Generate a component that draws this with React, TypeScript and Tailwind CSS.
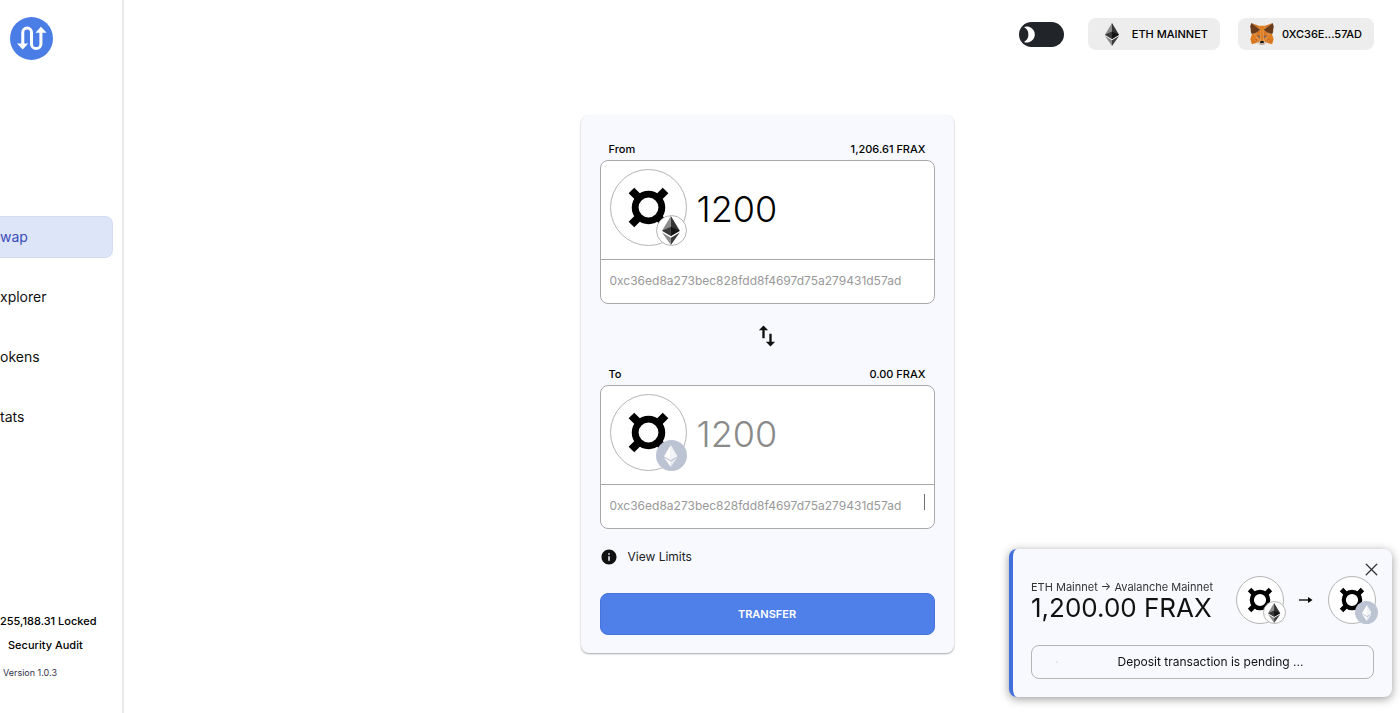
import { X } from 'lucide-react';
import { MdInfo, MdSwapVert } from 'react-icons/md';

const ADDRESS = '0xc36ed8a273bec828fdd8f4697d75a279431d57ad';

const navItems = [
  { href: '#swap', label: 'wap', active: true },
  { href: '#explorer', label: 'xplorer', active: false },
  { href: '#tokens', label: 'okens', active: false },
  { href: '#stats', label: 'tats', active: false },
];

function Logo() {
  return (
    <svg viewBox="0 0 128 128" className="size-[43px]" aria-hidden="true">
      <circle cx="64" cy="64" r="64" fill="#4a7ee6" />
      <path
        d="M38 82V46a13 13 0 0 1 26 0V80a14 14 0 0 0 28 0V44"
        fill="none"
        stroke="#fff"
        strokeWidth="9"
      />
      <path d="M21 79H54L38 97zM76 47H109L92 29z" fill="#fff" />
    </svg>
  );
}

function EthIcon({ className }: { className: string }) {
  return (
    <svg viewBox="0 0 256 417" className={className} aria-hidden="true">
      <path fill="#343434" d="M128 0l-3 9.500v275.700l3 2.800 128-75.700z" />
      <path fill="#8c8c8c" d="M128 0L0 212.300l128 75.700V154.200z" />
      <path fill="#3c3c3b" d="M128 312.200l-1.600 1.900v98.200l1.600 4.600L256 236.600z" />
      <path fill="#8c8c8c" d="M128 416.900V312.200L0 236.600z" />
      <path fill="#141414" d="M128 288l128-75.700-128-58.100z" />
      <path fill="#393939" d="M0 212.300L128 288V154.200z" />
    </svg>
  );
}

function EthPaleIcon({ className }: { className: string }) {
  return (
    <svg viewBox="0 0 256 417" className={className} aria-hidden="true">
      <path fill="#fff" d="M128 0L0 212.300l128 75.700z" />
      <path fill="#f1f3f7" d="M128 0v288l128-75.700z" />
      <path fill="#fff" d="M128 416.900V312.200L0 236.600z" />
      <path fill="#e6e9ef" d="M128 416.900V312.200l128-75.600z" />
    </svg>
  );
}

function FraxIcon({ className }: { className: string }) {
  return (
    <svg viewBox="0 0 77 77" className={className} aria-hidden="true">
      <g fill="none" stroke="#000">
        <circle cx="38.5" cy="38.5" r="13.7" strokeWidth="7" />
        <path
          d="M21 21l9 9M56 21l-9 9M21 56l9-9M56 56l-9-9"
          strokeWidth="8.200"
        />
      </g>
    </svg>
  );
}

function FoxIcon() {
  return (
    <svg viewBox="31 35 257 237" className="h-[22px] w-6" aria-hidden="true">
      <g fill="#d9771f">
        <path d="M274.100 35.500L174.600 109.400 193 65.800zM44.400 35.500l98.700 74.600-17.500-44.300z" />
        <path d="M238.300 206.800l-26.500 40.600 56.700 15.600 16.300-55.300zM33.900 207.700L50.100 263l56.700-15.600-26.500-40.600z" />
        <path d="M103.600 138.200l-15.800 23.900 56.300 2.500-2-60.500zM214.900 138.200l-39-34.800-1.300 61.200 56.200-2.500zM106.800 247.400l33.800-16.500-29.200-22.800zM177.900 230.900l33.900 16.500-4.700-39.300z" />
      </g>
      <path fill="#e07f22" d="M267.200 153.500l-52.300-15.300 15.900 23.900-23.700 46 31.200-.4h46.500zM103.600 138.200l-52.300 15.300-17.400 54.200h46.400l31.100.4-23.600-46zM174.600 164.600l3.300-57.700 15.200-41.100h-67.500l15 41.100 3.500 57.700 1.200 18.200.1 44.800h27.700l.2-44.800z" />
      <path fill="#e07f22" d="M179.800 193.500l-6.700 34.100 4.800 3.300 29.200-22.800 1-22.900zM110.600 185.200l.8 22.900 29.200 22.800 4.800-3.300-6.600-34.100z" />
      <path fill="#d9771f" d="M87.800 162.100l23.600 46-.8-22.900zM208.100 185.200l-1 22.900 23.700-46zM144.100 164.600l-5.300 28.900 6.600 34.100 1.500-44.900zM174.600 164.600l-2.700 18 1.200 45 6.700-34.100z" />
      <path fill="#c86517" d="M106.800 247.400l4.800-40.600-31.300.9zM207 206.800l4.800 40.600 26.500-39.700zM230.800 162.100l-56.200 2.500 5.200 28.900 8.300-17.400 20 9.100zM110.600 185.200l20-9.100 8.200 17.400 5.300-28.900-56.300-2.500z" />
      <path fill="#233447" d="M138.800 193.500l-28.200-8.300 19.900-9.100zM179.700 193.500l8.300-17.400 20 9.100z" />
      <path fill="#d7c1b3" d="M211.800 247.400l-33.900-16.500 2.700 22.100-.3 9.300zM106.800 247.400l31.500 14.900-.2-9.300 2.500-22.100z" />
      <path fill="#c0ad9e" d="M180.300 262.300l.3-9.300-2.500-2.200h-37.700l-2.300 2.200.2 9.300-31.500-14.900 11 9 22.300 15.500h38.300l22.400-15.500 11-9z" />
      <path fill="#161616" d="M177.900 230.900l-4.800-3.300h-27.700l-4.800 3.300-2.500 22.100 2.300-2.200h37.700l2.500 2.200z" />
      <path fill="#6b3c1c" d="M278.300 114.200l8.500-40.800-12.700-37.900-96.200 71.400 37 31.300 52.300 15.300 11.600-13.500-5-3.600 8-7.300-6.200-4.800 8-6.100zM31.800 73.400l8.500 40.800-5.400 4 8 6.100-6.100 4.800 8 7.300-5 3.600 11.500 13.500 52.300-15.300 37-31.300L44.400 35.500z" />
    </svg>
  );
}

function LargeCoin({ pale = false }: { pale?: boolean }) {
  return (
    <div className="relative size-[77px] shrink-0 rounded-full border border-[#b5b5b5] bg-white">
      <FraxIcon className="size-full" />
      {pale ? (
        <div className="absolute -right-px -bottom-px flex size-[31px] items-center justify-center rounded-full bg-[#bcc3d3]">
          <EthPaleIcon className="h-[22px]" />
        </div>
      ) : (
        <div className="absolute -right-px -bottom-px flex size-[31px] items-center justify-center rounded-full border border-[#b5b5b5] bg-white">
          <EthIcon className="h-[29px] shrink-0" />
        </div>
      )}
    </div>
  );
}

function SmallCoin({ pale = false }: { pale?: boolean }) {
  return (
    <div className="relative size-12 shrink-0 rounded-full border border-[#b5b5b5] bg-white">
      <FraxIcon className="size-full" />
      {pale ? (
        <div className="absolute -right-[3px] -bottom-px flex size-[23px] items-center justify-center rounded-full bg-[#bcc3d3]">
          <EthPaleIcon className="h-4" />
        </div>
      ) : (
        <div className="absolute -right-[3px] -bottom-px flex size-[23px] items-center justify-center rounded-full border border-[#b5b5b5] bg-white">
          <EthIcon className="h-5 shrink-0" />
        </div>
      )}
    </div>
  );
}

interface TokenPanelProps {
  id: string;
  label: string;
  balance: string;
  destination?: boolean;
}

function TokenPanel({ id, label, balance, destination = false }: TokenPanelProps) {
  return (
    <section>
      <div className="flex h-[22px] items-center justify-between px-[9px] text-[11px] font-medium text-black">
        <label htmlFor={`${id}-amount`}>{label}</label>
        <span>{balance}</span>
      </div>
      <div className="rounded-lg border border-[#a9a9a9] bg-white">
        <div className="flex h-[99px] items-start gap-2.5 border-b border-[#a9a9a9] px-[9px] pt-2">
          <LargeCoin pale={destination} />
          <input
            id={`${id}-amount`}
            type="text"
            defaultValue="1200"
            readOnly={destination}
            className={`h-20 min-w-0 flex-1 bg-transparent text-[36px] font-light outline-none ${
              destination ? 'text-[#8a8a8a]' : 'text-black'
            }`}
          />
        </div>
        <div className="flex h-[43px] items-center px-[9px] pb-0.5">
          <input
            type="text"
            aria-label={`${label} address`}
            defaultValue={ADDRESS}
            readOnly
            className="h-6 min-w-0 flex-1 bg-transparent text-xs text-[#999999] outline-none"
          />
          {destination && <span className="mb-2 h-4 w-px bg-[#707070]" />}
        </div>
      </div>
    </section>
  );
}

function Sidebar() {
  return (
    <aside className="flex w-[124px] shrink-0 flex-col border-r-2 border-[#e9e9e9] pt-[17px] pb-8">
      <a href="#home" aria-label="Home" className="ml-2.5 self-start">
        <Logo />
      </a>
      <nav className="mt-[156px] flex flex-col gap-[18px] pr-[9px]">
        {navItems.map(({ href, label, active }) => (
          <a
            key={href}
            href={href}
            className={`flex h-[42px] items-center rounded-r-lg text-sm ${
              active ? 'border border-l-0 border-[#d3dcf3] bg-[#dde5f8] text-[#3a4bb8]' : 'text-[#111111]'
            }`}
          >
            {label}
          </a>
        ))}
      </nav>
      <div className="mt-auto flex flex-col text-[11px] font-medium text-black">
        <p className="leading-6">255,188.31 Locked</p>
        <a href="#audit" className="pl-2 leading-6">
          Security Audit
        </a>
        <p className="mt-2 pl-[3px] text-[9px] leading-4 font-normal text-[#33334d]">Version 1.0.3</p>
      </div>
    </aside>
  );
}

function Header() {
  return (
    <header className="flex items-center justify-end pt-[18px] pr-[26px] text-[11px] font-medium text-black">
      <label className="relative mr-6 block h-[25px] w-[45px] cursor-pointer rounded-full bg-[#212429]">
        <input type="checkbox" role="switch" aria-label="Dark mode" className="peer sr-only" />
        <svg viewBox="0 0 45 25" className="h-full w-full" aria-hidden="true">
          <path d="M5 5A8 8 0 1 1 5 20A8.600 8.600 0 0 0 5 5z" fill="#fff" />
        </svg>
      </label>
      <button type="button" className="mr-[18px] flex h-8 items-center rounded-lg bg-[#ededed] pr-3 pl-4">
        <EthIcon className="mr-3 h-[23px] w-4" />
        ETH MAINNET
      </button>
      <button type="button" className="flex h-8 items-center gap-2 rounded-lg bg-[#ededed] px-3">
        <FoxIcon />
        0XC36E...57AD
      </button>
    </header>
  );
}

function SwapCard() {
  return (
    <form
      onSubmit={(event) => event.preventDefault()}
      className="w-[373px] rounded-lg bg-[#f7f9ff] px-[19px] pt-[23px] pb-[18px] shadow-[0_1px_2px_rgba(0,0,0,0.35)]"
    >
      <TokenPanel id="from" label="From" balance="1,206.61 FRAX" />
      <div className="flex h-[59px] items-center justify-center pt-1">
        <button type="button" aria-label="Switch direction">
          <MdSwapVert className="size-7 text-[#111111]" />
        </button>
      </div>
      <TokenPanel id="to" label="To" balance="0.00 FRAX" destination />
      <button type="button" className="mt-[18px] flex h-5 items-center gap-2.5 text-xs text-[#222222]">
        <MdInfo className="size-[18px] text-[#111111]" />
        View Limits
      </button>
      <button
        type="submit"
        className="mt-[26px] h-[42px] w-full rounded-lg border border-[#4674da] bg-[#4f80e9] text-[11px] font-semibold text-white"
      >
        TRANSFER
      </button>
    </form>
  );
}

function Toast() {
  return (
    <div
      role="status"
      className="fixed right-2 bottom-4 w-[383px] rounded-lg border-l-4 border-[#416fdb] bg-[#f7f9ff] px-[18px] pt-[27px] pb-[18px] text-[#111111] shadow-[0_2px_10px_rgba(0,0,0,0.4)]"
    >
      <button type="button" aria-label="Close" className="absolute top-2.5 right-2.5 text-[#333333]">
        <X className="size-[21px]" strokeWidth={1.5} />
      </button>
      <div className="flex items-start">
        <div className="flex-1 pt-1 whitespace-nowrap">
          <p className="text-[11px] leading-[14px] text-[#333333]">ETH Mainnet → Avalanche Mainnet</p>
          <p className="text-[26px] leading-7">1,200.00 FRAX</p>
        </div>
        <div className="-mr-0.5 flex items-center">
          <SmallCoin />
          <svg viewBox="0 0 14 8" className="mx-[15px] h-2 w-3.5" aria-hidden="true">
            <path d="M0 4h11" stroke="#000" strokeWidth="1.300" />
            <path d="M9 1l4.500 3L9 7z" fill="#000" />
          </svg>
          <SmallCoin pale />
        </div>
      </div>
      <div className="mt-[21px] flex items-center rounded-lg border border-[#b5b5b5] pl-6 text-xs leading-8">
        <span className="size-0.5 rounded-full bg-[#dcdfe6]" />
        <p className="flex-1 pr-2.5 text-center">Deposit transaction is pending ...</p>
      </div>
    </div>
  );
}

export default function App() {
  return (
    <div className="flex min-h-screen bg-white font-['Inter',sans-serif]">
      <Sidebar />
      <div className="flex min-w-0 flex-1 flex-col">
        <Header />
        <main className="flex justify-center pt-[65px] pl-2.5">
          <SwapCard />
        </main>
      </div>
      <Toast />
    </div>
  );
}
